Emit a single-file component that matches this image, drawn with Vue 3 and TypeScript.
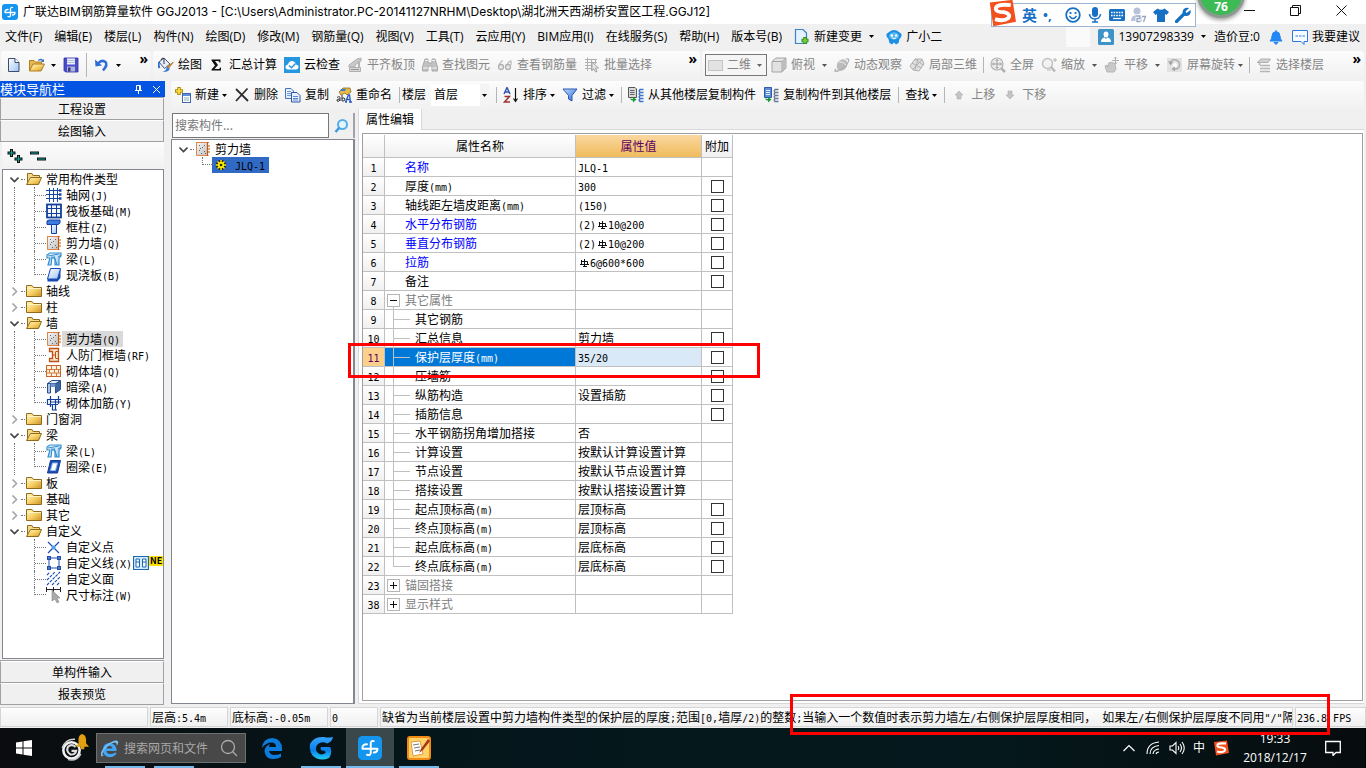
<script setup lang="ts">
import { h, reactive, ref } from 'vue'

interface Tool { label: string; icon?: string; caret?: boolean; sep?: boolean; off?: boolean; tight?: boolean }
interface Leaf { label: string; icon: string; selected?: boolean; isNew?: boolean }
interface Group { label: string; open: boolean; items: Leaf[] }
interface Prop { no: number; name: string; value: string; check?: boolean; level?: number; blue?: boolean; node?: string; last?: boolean }

// Half-width characters take six pixels next to twelve-pixel ideographs.
const Mix = (props: { text: string }) =>
  h('span', { class: 'mix' }, props.text.split(/([\x20-\x7e]+|⌀)/).filter(Boolean).map((part) => {
    if (part === '⌀') return h('svg', { class: 'rebar', viewBox: '0 0 12 10' }, [h('use', { href: '#i-rebar' })])
    return /^[\x20-\x7e]/.test(part) ? h('span', { class: 'half' }, part) : part
  }))
Mix.props = ['text']

const Ic = (props: { name: string }) =>
  h('svg', { class: 'ic', viewBox: '0 0 16 16', 'aria-hidden': 'true' }, [h('use', { href: '#i-' + props.name })])
Ic.props = ['name']

const Caret = () => h('svg', { class: 'caret', viewBox: '0 0 5 3', 'aria-hidden': 'true' }, [h('path', { d: 'M0 0H5L2.5 3Z', fill: 'currentColor' })])

const menus = ['文件(F)', '编辑(E)', '楼层(L)', '构件(N)', '绘图(D)', '修改(M)', '钢筋量(Q)', '视图(V)', '工具(T)', '云应用(Y)', 'BIM应用(I)', '在线服务(S)', '帮助(H)', '版本号(B)']

const drawTools: Tool[] = [
  { label: '绘图', icon: 'draw' }, { label: '汇总计算', icon: 'sigma' }, { label: '云检查', icon: 'cloud' },
  { label: '平齐板顶', icon: 'align', off: true }, { label: '查找图元', icon: 'bino', off: true },
  { label: '查看钢筋量', icon: 'glasses', off: true }, { label: '批量选择', icon: 'batch', off: true },
]
const viewTools: Tool[] = [
  { label: '俯视', icon: 'cube', caret: true, off: true }, { label: '动态观察', icon: 'orbit', off: true },
  { label: '局部三维', icon: 'part', off: true }, { label: '', sep: true },
  { label: '全屏', icon: 'full', off: true }, { label: '缩放', icon: 'zoom', caret: true, off: true },
  { label: '平移', icon: 'pan', caret: true, off: true }, { label: '屏幕旋转', icon: 'rotate', caret: true, tight: true, off: true },
  { label: '', sep: true }, { label: '选择楼层', icon: 'floors', off: true },
]
const editTools: Tool[] = [
  { label: '新建', icon: 'new', caret: true }, { label: '删除', icon: 'delete' }, { label: '复制', icon: 'copy' },
  { label: '重命名', icon: 'rename' }, { label: '', sep: true },
]
const listTools: Tool[] = [
  { label: '', sep: true }, { label: '排序', icon: 'sort', caret: true }, { label: '过滤', icon: 'filter', caret: true },
  { label: '', sep: true }, { label: '从其他楼层复制构件', icon: 'from' }, { label: '复制构件到其他楼层', icon: 'to' },
  { label: '', sep: true }, { label: '查找', caret: true }, { label: '', sep: true },
  { label: '上移', icon: 'up', off: true }, { label: '下移', icon: 'down', off: true },
]

const groups = reactive<Group[]>([
  { label: '常用构件类型', open: true, items: [
    { label: '轴网(J)', icon: 'grid' }, { label: '筏板基础(M)', icon: 'raft' }, { label: '框柱(Z)', icon: 'column' },
    { label: '剪力墙(Q)', icon: 'wall' }, { label: '梁(L)', icon: 'beam' }, { label: '现浇板(B)', icon: 'slab' }] },
  { label: '轴线', open: false, items: [] },
  { label: '柱', open: false, items: [] },
  { label: '墙', open: true, items: [
    { label: '剪力墙(Q)', icon: 'wall', selected: true }, { label: '人防门框墙(RF)', icon: 'frame' }, { label: '砌体墙(Q)', icon: 'brick' },
    { label: '暗梁(A)', icon: 'hidden' }, { label: '砌体加筋(Y)', icon: 'reinf' }] },
  { label: '门窗洞', open: false, items: [] },
  { label: '梁', open: true, items: [{ label: '梁(L)', icon: 'beam' }, { label: '圈梁(E)', icon: 'ring' }] },
  { label: '板', open: false, items: [] },
  { label: '基础', open: false, items: [] },
  { label: '其它', open: false, items: [] },
  { label: '自定义', open: true, items: [
    { label: '自定义点', icon: 'point' }, { label: '自定义线(X)', icon: 'line', isNew: true },
    { label: '自定义面', icon: 'area' }, { label: '尺寸标注(W)', icon: 'dim' }] },
])

const rows: Prop[] = [
  { no: 1, name: '名称', value: 'JLQ-1', blue: true },
  { no: 2, name: '厚度(mm)', value: '300', check: true },
  { no: 3, name: '轴线距左墙皮距离(mm)', value: '(150)', check: true },
  { no: 4, name: '水平分布钢筋', value: '(2)⌀10@200', check: true, blue: true },
  { no: 5, name: '垂直分布钢筋', value: '(2)⌀10@200', check: true, blue: true },
  { no: 6, name: '拉筋', value: '⌀6@600*600', check: true, blue: true },
  { no: 7, name: '备注', value: '', check: true },
  { no: 8, name: '其它属性', value: '', node: 'minus' },
  { no: 9, name: '其它钢筋', value: '', level: 1 },
  { no: 10, name: '汇总信息', value: '剪力墙', check: true, level: 1 },
  { no: 11, name: '保护层厚度(mm)', value: '35/20', check: true, level: 1 },
  { no: 12, name: '压墙筋', value: '', check: true, level: 1 },
  { no: 13, name: '纵筋构造', value: '设置插筋', check: true, level: 1 },
  { no: 14, name: '插筋信息', value: '', check: true, level: 1 },
  { no: 15, name: '水平钢筋拐角增加搭接', value: '否', level: 1 },
  { no: 16, name: '计算设置', value: '按默认计算设置计算', level: 1 },
  { no: 17, name: '节点设置', value: '按默认节点设置计算', level: 1 },
  { no: 18, name: '搭接设置', value: '按默认搭接设置计算', level: 1 },
  { no: 19, name: '起点顶标高(m)', value: '层顶标高', check: true, level: 1 },
  { no: 20, name: '终点顶标高(m)', value: '层顶标高', check: true, level: 1 },
  { no: 21, name: '起点底标高(m)', value: '层底标高', check: true, level: 1 },
  { no: 22, name: '终点底标高(m)', value: '层底标高', check: true, level: 1, last: true },
  { no: 23, name: '锚固搭接', value: '', node: 'plus' },
  { no: 38, name: '显示样式', value: '', node: 'plus' },
]
const current = ref(11)
const query = ref('')
const message = '缺省为当前楼层设置中剪力墙构件类型的保护层的厚度;范围[0,墙厚/2)的整数;当输入一个数值时表示剪力墙左/右侧保护层厚度相同， 如果左/右侧保护层厚度不同用"/"隔'
</script>

<template>
  <div class="screen">
    <svg class="sprite" aria-hidden="true">
      <defs>
        <linearGradient id="gold" x1="0" y1="0" x2="1" y2="1"><stop offset="0" stop-color="#fff6c0" /><stop offset=".5" stop-color="#f7d26a" /><stop offset="1" stop-color="#cf9220" /></linearGradient>
        <linearGradient id="blue" x1="0" y1="0" x2="1" y2="1"><stop offset="0" stop-color="#bfe0ff" /><stop offset="1" stop-color="#2a62c8" /></linearGradient>
        <linearGradient id="glass" x1="0" y1="0" x2="1" y2="1"><stop offset="0" stop-color="#fff" /><stop offset="1" stop-color="#9dc4f0" /></linearGradient>
        <linearGradient id="stone" x1="0" y1="0" x2="1" y2="1"><stop offset="0" stop-color="#f4f4f4" /><stop offset="1" stop-color="#c2c2c2" /></linearGradient>
        <linearGradient id="swirl" x1="0" y1="0" x2="0" y2="1"><stop offset="0" stop-color="#35a4ff" /><stop offset=".6" stop-color="#0a80ea" /><stop offset="1" stop-color="#22d0f5" /></linearGradient>
      </defs>
      <symbol id="i-app" viewBox="0 0 16 16"><rect width="16" height="16" rx="3" fill="#1496f0" /><path d="M3 8.500H13M8.500 4.500V11.500Q8 13.300 6 12.500M3 8.500Q2.500 5.500 6 5.500M8.500 4.500Q9 3 10.500 3.500M13 8.500Q13 11 10.500 11" stroke="#fff" stroke-width="1.300" fill="none" stroke-linecap="round" /></symbol>
      <symbol id="i-page" viewBox="0 0 16 16"><path d="M2.500 1.500H9L13 5.500V14.500H2.500Z" fill="url(#glass)" stroke="#3c4c6c" /><path d="M9 1.500V5.500H13" fill="#fff" stroke="#3c4c6c" /></symbol>
      <symbol id="i-open" viewBox="0 0 16 16"><path d="M.5 14V3.500H5L6.500 5H12.500V7" fill="#e5b952" stroke="#b07d20" /><path d="M.5 14L4 7H15.500L12 14Z" fill="url(#gold)" stroke="#b07d20" /><path d="M9 3Q12 .5 14 3L15 2V5H12L13 4Q11.500 2.500 9.500 4Z" fill="#3a6fc4" /></symbol>
      <symbol id="i-save" viewBox="0 0 16 16"><path d="M1 1H15V15H2.500L1 13.500Z" fill="#4a4ccc" stroke="#3030a0" stroke-width=".8" /><rect x="4" y="1.500" width="8" height="6" fill="#eef2ff" /><path d="M4 3.500H12M4 5.500H12" stroke="#9ab" stroke-width=".7" /><rect x="4" y="9.500" width="8" height="5" fill="#b0b4d8" /><rect x="5" y="10.500" width="2.500" height="4" fill="#333a80" /></symbol>
      <symbol id="i-undo" viewBox="0 0 16 16"><path d="M4 6.500Q8 2 11.500 5Q14 8 9 13.500" fill="none" stroke="#2e6ed4" stroke-width="2.600" /><path d="M1 2.500L1.500 9.500L8 8.500Z" fill="#2e6ed4" /></symbol>
      <symbol id="i-draw" viewBox="0 0 16 16"><path d="M1 5L6 1L12 7L6.500 11.500Z" fill="#e8eef8" stroke="#44587c" /><path d="M6 7V1.500Q4 0 3 3" fill="none" stroke="#334" /><path d="M1 5Q0 8 1.500 11" stroke="#2c6ed0" stroke-width="2" fill="none" /><path d="M15.500 5L11 11L9.500 9.500Z" fill="#e8a01c" stroke="#95620c" stroke-width=".6" /><path d="M9 9.500L12 12Q10 15.500 4.500 15Q8 14 9 9.500Z" fill="#3f7cd2" /></symbol>
      <symbol id="i-sigma" viewBox="0 0 16 16"><path d="M2.500 2.500H11.500V5.500H10.500Q10.500 4 9 4H6L9 8L5.500 12H9.500Q11 12 11 10.500H12V13.500H2.500V12.500L6 8.500L2.500 3.500Z" fill="#111" /></symbol>
      <symbol id="i-cloud" viewBox="0 0 16 16"><rect width="16" height="16" fill="#2796e0" /><path d="M4 12.500Q1 12 1.500 9.500Q2 7.500 4 7.500Q5 3.500 8.500 4Q11.500 4.500 12 7.500Q15 8 14.500 10.500Q14 12.500 12 12.500Z" fill="#fff" /><path d="M5 8.500L7.500 10.800L11.500 6.500" fill="none" stroke="#2796e0" stroke-width="1.500" /></symbol>
      <symbol id="i-align" viewBox="0 0 16 16"><path d="M2 8L10 2L14 1V4L8 8V10H2Z" fill="#c9c9c9" stroke="#b0b0b0" /><path d="M2.500 10.500H13.500V14.500H2.500Z" fill="#d5d5d5" stroke="#b0b0b0" /><path d="M4 12.500H12" stroke="#999" /><path d="M12 4V10" stroke="#b5b5b5" stroke-width="2" /></symbol>
      <symbol id="i-bino" viewBox="0 0 16 16"><path d="M3 2H6V6H10V2H13L15.500 10V14H10V9H6V14H.5V10Z" fill="#c2c2c2" stroke="#a8a8a8" /><path d="M3 3.500H6M10 3.500H13M1 11H6M10 11H15" stroke="#f2f2f2" /></symbol>
      <symbol id="i-glasses" viewBox="0 0 16 16"><path d="M1.500 9.500Q4 3.500 6 4M9 9.500Q12 3.500 14 4V8" fill="none" stroke="#b8b8b8" stroke-width="1.200" /><circle cx="4" cy="10" r="2.500" fill="#e9e9e9" stroke="#b0b0b0" stroke-width="1.300" /><circle cx="11" cy="10" r="2.500" fill="#e9e9e9" stroke="#b0b0b0" stroke-width="1.300" /></symbol>
      <symbol id="i-batch" viewBox="0 0 16 16"><path d="M1 2.500H13M1 5.500H13M1 8.500H8M1 11.500H8M3.500 .5V14M7.500 2V14M11.500 2V7" stroke="#b0b0b0" fill="none" /><path d="M8 5L14.500 11H11.500L13 14.500L11.500 15L10 12L8 13.500Z" fill="#e4e4e4" stroke="#a5a5a5" /></symbol>
      <symbol id="i-plate" viewBox="0 0 16 16"><rect x=".5" y="3.500" width="14" height="10" fill="#e2e2e2" stroke="#c4c4c4" /></symbol>
      <symbol id="i-cube" viewBox="0 0 16 16"><path d="M1 4.500L5 1H15V11L11 15H1Z" fill="#e2e2e2" stroke="#a5a5a5" /><path d="M1 4.500H11V15M11 4.500L15 1" fill="none" stroke="#a5a5a5" /><path d="M11 5L14.500 2V11L11 14.500Z" fill="#bdbdbd" /></symbol>
      <symbol id="i-orbit" viewBox="0 0 16 16"><ellipse cx="8" cy="8" rx="5" ry="6" transform="rotate(35 8 8)" fill="#bcbcbc" /><path d="M2 12Q-1 15 4 14Q9 12 13 7Q17 1 12 2" fill="none" stroke="#b0b0b0" stroke-width="1.300" /><path d="M5 5Q9 4 12 8" stroke="#eee" fill="none" /></symbol>
      <symbol id="i-part" viewBox="0 0 16 16"><path d="M1 9L6 2L13 2L15 7L10 14L4 13Z" fill="#e0e0e0" stroke="#b0b0b0" /><path d="M3 6L12 11M9 2L6 13M6 2L14 8M13 3L4 12" stroke="#b0b0b0" fill="none" /></symbol>
      <symbol id="i-full" viewBox="0 0 16 16"><circle cx="7" cy="7" r="6" fill="#eee" stroke="#b2b2b2" stroke-width="1.200" /><path d="M7 2.500V11.500M2.500 7H11.500M5.500 4L7 2.500L8.500 4M5.500 10L7 11.500L8.500 10M4 5.500L2.500 7L4 8.500M10 5.500L11.500 7L10 8.500" stroke="#9c9c9c" fill="none" /><path d="M11.500 11.500L15 15" stroke="#b0b0b0" stroke-width="2.500" /></symbol>
      <symbol id="i-zoom" viewBox="0 0 16 16"><circle cx="6.500" cy="6.500" r="5" fill="#f2f2f2" stroke="#c2c2c2" stroke-width="1.500" /><path d="M10 10L14 14.500" stroke="#b8b8b8" stroke-width="2.500" /><path d="M14 1V5M12 3H16M10 13H6" stroke="#b5b5b5" /></symbol>
      <symbol id="i-pan" viewBox="0 0 16 16"><path d="M3 15L1 9L3 8L4 10L5 5.500L7 6L7.500 5L9 6L11 7L12 12L10 15Z" fill="#c9c9c9" stroke="#b5b5b5" /><path d="M11.500 0V7M8 3.500H15M10 1.500L11.500 0L13 1.500M10 5.500L11.500 7L13 5.500" stroke="#b0b0b0" fill="none" /></symbol>
      <symbol id="i-rotate" viewBox="0 0 16 16"><rect x="0" y="1" width="15" height="14" fill="#e2e2e2" /><path d="M3 7Q4 2 9 3Q14 5 12 10Q10 13 6 12" fill="none" stroke="#b0b0b0" stroke-width="1.500" /><path d="M1 4L3.500 8.500L6 5ZM8 9.500L4.500 12L8 14.500Z" fill="#a5a5a5" /><circle cx="8" cy="8" r="2" fill="#fff" /></symbol>
      <symbol id="i-floors" viewBox="0 0 16 16"><path d="M1 5.500L5 2H14.500L12 5.500Z" fill="#d0d0d0" stroke="#b0b0b0" /><path d="M4 8.500H14M4 11.500H14M4 14.500H14M3.500 6V8" stroke="#b5b5b5" stroke-width="1.600" /></symbol>
      <symbol id="i-new" viewBox="0 0 16 16"><path d="M4 0V8M0 4H8" stroke="#b08b00" stroke-width="3.500" /><path d="M4 1V7M1 4H7" stroke="#ffe24a" stroke-width="1.700" /><rect x="7.500" y="6.500" width="8" height="9" fill="#fff" stroke="#3f68ad" /><path d="M8 8H15" stroke="#5b8ee0" stroke-width="2" /><path d="M9 11H14M9 13H14" stroke="#8ab" /></symbol>
      <symbol id="i-delete" viewBox="0 0 16 16"><path d="M2 2L14 14M13.500 1.500L2 14" stroke="#2e2e2e" stroke-width="1.800" /></symbol>
      <symbol id="i-copy" viewBox="0 0 16 16"><path d="M.5 1.500H6L8.500 4V11.500H.5Z" fill="#e7f0ff" stroke="#4671bd" /><path d="M2 4.500H6M2 6.500H6M2 8.500H6" stroke="#7298d6" /><path d="M6.500 5.500H12L15 8.500V15H6.500Z" fill="#e7f0ff" stroke="#2c57a8" /><path d="M8 9.500H13M8 11.500H13M8 13H13" stroke="#5c87cf" /></symbol>
      <symbol id="i-rename" viewBox="0 0 16 16"><path d="M3 5L7 1H14L15 5L11 8L9 6L5 8Z" fill="#e6bb49" stroke="#7a5c15" stroke-width=".7" /><path d="M5 2H10L9 4H4Z" fill="#3f7fc0" /><path d="M1 10.500Q4 8.500 4 11V14M4 12Q0 12 1 14Q3 15 4 13M6 8V14Q9 14.500 9 12Q8.500 10 6 11.500" stroke="#333" fill="none" /><path d="M9.500 15L12.500 8H13.500L14.500 15M10.500 12.500H14M9 15H11M13 15H16" stroke="#2458c0" stroke-width="1.300" fill="none" /></symbol>
      <symbol id="i-sort" viewBox="0 0 16 16"><path d="M1 7L4 .5L7 7M2 5H6" stroke="#2c50b0" stroke-width="1.400" fill="none" /><path d="M1.500 9.500H6.500L1.500 15H7" stroke="#a03030" stroke-width="1.400" fill="none" /><path d="M12.500 1V14M10.500 11.500L12.500 14.500L14.500 11.500" stroke="#111" stroke-width="1.200" fill="none" /></symbol>
      <symbol id="i-filter" viewBox="0 0 16 16"><path d="M1 2H15L10 8.500V14L6.500 12V8.500Z" fill="url(#blue)" stroke="#2856b8" /></symbol>
      <symbol id="i-from" viewBox="0 0 16 16"><path d="M.5 .5H7L8.500 2V10.500H.5Z" fill="#d8d8d8" stroke="#555" /><path d="M2 3.500H6.500M2 5.500H6.500M2 7.500H6.500" stroke="#666" /><path d="M2 11.500Q3 14 5 13.500V15.500L8.500 12.500L5 10V12Z" fill="#179b35" /><path d="M15.500 2.500H12Q10.500 4 12 5.500H15.500M12 5.500Q10.500 7 12 8.500H15.500M12 8.500Q10.500 10 12 11.500H15.500M12 11.500Q10.500 13 12 14.500H15.500" stroke="#3d77ca" stroke-width="1.500" fill="none" /></symbol>
      <symbol id="i-to" viewBox="0 0 16 16"><path d="M1.500 .5H8.500V10.500H1.500Z" fill="#5c8eda" stroke="#2c5ca8" /><path d="M3 3.500H7M3 5.500H7M3 7.500H7" stroke="#e3edff" /><path d="M2 11.500Q3 14 5 13.500V15.500L8.500 12.500L5 10V12Z" fill="#179b35" /><path d="M15.500 2.500H12Q10.500 4 12 5.500H15.500M12 5.500Q10.500 7 12 8.500H15.500M12 8.500Q10.500 10 12 11.500H15.500M12 11.500Q10.500 13 12 14.500H15.500" stroke="#667790" stroke-width="1.300" fill="none" /></symbol>
      <symbol id="i-up" viewBox="0 0 16 16"><path d="M8 4L12 8H10V12H6V8H4Z" fill="#c4c4c4" stroke="#b0b0b0" stroke-width=".6" /></symbol>
      <symbol id="i-down" viewBox="0 0 16 16"><path d="M8 12L12 8H10V4H6V8H4Z" fill="#c4c4c4" stroke="#b0b0b0" stroke-width=".6" /></symbol>
      <symbol id="i-change" viewBox="0 0 16 16"><path d="M1.500 .5H9L12.500 4V14.500H1.500Z" fill="#e4f1ff" stroke="#3c82c4" stroke-width="1.200" /><path d="M11 8V15M7.500 11.500H14.500" stroke="#2f8c1c" stroke-width="3.600" /><path d="M11 9V14M8.500 11.500H13.500" stroke="#75cc42" stroke-width="1.800" /></symbol>
      <symbol id="i-robot" viewBox="0 0 16 16"><path d="M3 3Q8-1 13 3L15.500 5Q16 8 13.500 10L12.500 14L10 15.500L8 13.500L6 15.500L3.500 14L2.500 10Q0 8 .5 5Z" fill="#1c8fe4" /><ellipse cx="8" cy="7" rx="5" ry="3.700" fill="#56b8f5" /><circle cx="5.800" cy="6.500" r="1.200" fill="#fff" /><circle cx="10.200" cy="6.500" r="1.200" fill="#fff" /><path d="M6 8.800Q8 10.500 10 8.800" stroke="#fff" fill="none" /></symbol>
      <symbol id="i-user" viewBox="0 0 16 16"><rect width="16" height="16" rx="1.500" fill="#3c93c8" /><path d="M8 2.500Q10.500 2.500 10.500 5.500Q10.500 8 8 8.500Q5.500 8 5.500 5.500Q5.500 2.500 8 2.500M3 13Q3 9 6.500 8.500L8 10L9.500 8.500Q13 9 13 13Z" fill="#fff" /></symbol>
      <symbol id="i-bell" viewBox="0 0 16 16"><path d="M8 1V2.500M8 2.500Q12 3 12 7Q12 10 14 12H2Q4 10 4 7Q4 3 8 2.500M6 13.500H10L8 15.500Z" fill="#2387f5" stroke="#2387f5" /></symbol>
      <symbol id="i-chat" viewBox="0 0 16 16"><path d="M.5 1.500H15.500V12.500H12V15.500L9 12.500H.5Z" fill="#f7fbff" stroke="#2a78e0" /><path d="M3.500 7H6M7 7H9.500M10.500 7H13" stroke="#2a78e0" stroke-width="1.200" /></symbol>
      <symbol id="i-plus2" viewBox="0 0 16 16"><path d="M4.500 1V9M.5 5H8.500M11.500 7V15M7.500 11H15.500" stroke="#111" stroke-width="3" /><path d="M4.500 2V8M1.500 5H7.500M11.500 8V14M8.500 11H14.500" stroke="#12a5a0" stroke-width="1" /></symbol>
      <symbol id="i-minus2" viewBox="0 0 16 16"><path d="M0 5H9M7 11H16" stroke="#111" stroke-width="3" /><path d="M1 5H8M8 11H15" stroke="#12a5a0" stroke-width="1" /></symbol>
      <symbol id="i-open2" viewBox="0 0 16 16"><path d="M1.500 13V2.500H6L7 4.500H13.500V6.500" fill="#f4d98a" stroke="#8e6a1a" /><path d="M.5 13.500L4.500 6.500H15.500L12.500 13.500Z" fill="url(#gold)" stroke="#8e6a1a" /></symbol>
      <symbol id="i-folder" viewBox="0 0 16 16"><path d="M.5 13.500V2.500H6L7.500 4.500H15.500V13.500Z" fill="url(#gold)" stroke="#8e6a1a" /><path d="M1 5.500H15" stroke="#fff3c4" /></symbol>
      <symbol id="i-grid" viewBox="0 0 16 16"><path d="M3.500 1V15M7.500 1V15M11.500 1V15M0 3.500H15M0 7.500H15M0 11.500H15" stroke="#1745aa" fill="none" /><path d="M13 3.500H15.500M13 7.500H15.500M13 11.500H15.500" stroke="#1745aa" stroke-width="2.500" /></symbol>
      <symbol id="i-raft" viewBox="0 0 16 16"><rect x="1" y="1.500" width="14" height="13" fill="#eef5ff" stroke="#123f98" stroke-width="1.800" /><path d="M5.500 2V14M10.500 2V14M1 5.500H15M1 10.500H15" stroke="#123f98" /><rect x="5.500" y="5.500" width="5" height="5" fill="#fff" stroke="#123f98" /></symbol>
      <symbol id="i-column" viewBox="0 0 16 16"><path d="M1 2L3 1H14V4L12 5.500H1Z" fill="#3c7be0" stroke="#143fa0" /><path d="M5.500 5.500H10.500V14.500H5.500Z" fill="url(#glass)" stroke="#143fa0" /></symbol>
      <symbol id="i-wall" viewBox="0 0 16 16"><path d="M2 2H12V14H2Z" fill="url(#stone)" /><path d="M1.500 1V14.500H13.500M1 1.500H14" stroke="#dd864c" fill="none" /><path d="M12.500 1V15" stroke="#c4561c" stroke-width="1.200" /><path d="M13 5H15M13 8H15M13 11H15" stroke="#e18b3c" stroke-width="1.500" /><path d="M4 4.500H5M7 6.500H8M4 9.500H5M6 12.500H7M9 10.500H10M9 4.500H10M10 12.500H11M5 7.500H6" stroke="#666" /></symbol>
      <symbol id="i-beam" viewBox="0 0 16 16"><path d="M1 4L4 2H15V5L13 7V14H9V8L6 6L5 14H2L4 7H1Z" fill="url(#glass)" stroke="#2f8ed2" stroke-width="1.200" /><path d="M2 5L13 3M8 5L11 14M12 6L15 4" stroke="#2f8ed2" /></symbol>
      <symbol id="i-slab" viewBox="0 0 16 16"><path d="M4.500 2H14.500V11L11.500 14.500H1.500V12Z" fill="#174ab4" /><path d="M4.500 1.500H14.500L11.500 12H1.500Z" fill="url(#glass)" stroke="#174ab4" /></symbol>
      <symbol id="i-frame" viewBox="0 0 16 16"><path d="M3.500 1.500H12.500V14.500H3.500V11.500H6.500V4.500H3.500Z" fill="#ffe5cd" stroke="#bd5214" stroke-width="1.300" /><path d="M9.500 5V11M7 8H10M9.500 4.500H12M9.500 11.500H12" stroke="#bd5214" fill="none" /></symbol>
      <symbol id="i-brick" viewBox="0 0 16 16"><rect x=".5" y="2.500" width="14" height="11" fill="#fff0df" stroke="#c7662a" /><path d="M1 6.500H14M1 10H14M5.500 3V6M10.500 3V6M3.500 7V10M8.500 7V10M12.500 7V10M5.500 10V13M10.500 10V13" stroke="#d37a3b" /></symbol>
      <symbol id="i-hidden" viewBox="0 0 16 16"><path d="M1.500 4.500L6 1.500H14.500L10 4.500Z" fill="#e4eefa" stroke="#2a4c88" /><path d="M9.500 5L14.500 2V10.500L9.500 14Z" fill="#3c66a4" stroke="#2a4c88" /><path d="M1.500 4.500H4.500V14H1.500Z" fill="#a8c4e8" stroke="#2a4c88" /><path d="M4.500 4.500H9.500V8H4.500Z" fill="#6f96cc" /></symbol>
      <symbol id="i-reinf" viewBox="0 0 16 16"><path d="M1 4.500H15M1 9.500H12M4.500 1V12M9.500 4V15M12.500 1V9M6.500 10V15H11M4 7H15M1.500 4V10" fill="none" stroke="#143f9c" stroke-width="1.200" /></symbol>
      <symbol id="i-ring" viewBox="0 0 16 16"><path d="M4.500 1.500H14.500L11.500 14H1.500Z" fill="#1c4eb6" stroke="#123c94" /><path d="M6.500 4H11.500L9.500 11.500H4.500Z" fill="#fff" stroke="#8cb8ec" /></symbol>
      <symbol id="i-point" viewBox="0 0 16 16"><path d="M2 3L13 14M13 3L2 14" stroke="#1c4eb0" stroke-width="1.200" /><circle cx="7.500" cy="8.500" r="2" fill="#4da1e8" /></symbol>
      <symbol id="i-line" viewBox="0 0 16 16"><path d="M3 3H13V13H3Z" fill="#fff" stroke="#1c4eb0" /><path d="M1 1H5V5H1ZM11 1H15V5H11ZM1 11H5V15H1ZM11 11H15V15H11Z" fill="#1c4eb0" /><path d="M2.500 2.500H3.500V3.500H2.500ZM12.500 2.500H13.500V3.500H12.500ZM2.500 12.500H3.500V13.500H2.500ZM12.500 12.500H13.500V13.500H12.500Z" fill="#fff" /></symbol>
      <symbol id="i-area" viewBox="0 0 16 16"><path d="M1 4L4 1M1 9L9 1M1 14L14 1M6 14L14 6M11 14L14 11" stroke="#1c4eb0" stroke-width="1.100" stroke-dasharray="3 1" /></symbol>
      <symbol id="i-dim" viewBox="0 0 16 16"><path d="M.5 0V5M14.500 0V5M1 2.500H14M7.500 0V5" stroke="#222" /><path d="M6 3L14 11H11L13 15L11 16L9 12L6 14Z" fill="#aaa" stroke="#888" stroke-width=".6" /></symbol>
      <symbol id="i-book" viewBox="0 0 16 16"><path d="M.5 1.500H15.500V14.500H.5Z" fill="#d7ecff" stroke="#1b67b0" stroke-width="1.200" /><path d="M3 4H6.500V12H3ZM9.500 4H13V12H9.500ZM3 7H6.500M9.500 7H13" fill="#fff" stroke="#1b67b0" /></symbol>
      <symbol id="i-find" viewBox="0 0 16 16"><circle cx="9.500" cy="6.500" r="4.500" fill="#e5f5ff" stroke="#56aee6" stroke-width="2" /><path d="M6.500 9.500L2.500 14" stroke="#3c9cdf" stroke-width="2.600" /></symbol>
      <symbol id="i-gear" viewBox="0 0 16 16"><path d="M8 3V13M3 8H13M4.500 4.500L11.500 11.500M11.500 4.500L4.500 11.500" stroke="#222" stroke-width="3.400" /><path d="M8 3V13M3 8H13M4.500 4.500L11.500 11.500M11.500 4.500L4.500 11.500" stroke="#ffef00" stroke-width="1.500" /><circle cx="8" cy="8" r="3" fill="#ffef00" /><circle cx="8" cy="8" r="1.300" fill="#222" /></symbol>
      <symbol id="i-rebar" viewBox="0 0 12 10"><path d="M3.500 3.500H9.500V6.500H3.500ZM6.500 1V9M2 6.500H11M5 8.500H9M3.500 2V7" stroke="#111" fill="none" /></symbol>
      <symbol id="i-s" viewBox="0 0 16 16"><path d="M1 2L14 .5L16 13L3 15.500Z" fill="#f2501d" /><path d="M13 3.500Q4 2.500 4.500 6Q5 7.500 9 7.500Q13.500 8.500 11.500 11Q9 13 4 11.500" fill="none" stroke="#fff" stroke-width="2.200" /></symbol>
      <symbol id="i-smile" viewBox="0 0 16 16"><circle cx="8" cy="8" r="6.800" fill="none" stroke="#1670c4" stroke-width="1.800" /><path d="M4.500 9Q8 14 11.500 9" fill="none" stroke="#1670c4" stroke-width="1.400" /><path d="M5.500 5V7M10.500 5V7" stroke="#1670c4" stroke-width="1.800" /></symbol>
      <symbol id="i-mic" viewBox="0 0 16 16"><rect x="5" y="0" width="6" height="10" rx="3" fill="#1670c4" /><path d="M2.500 7Q3 12 8 12Q13 12 13.500 7M8 12V15M5 15H11" stroke="#1670c4" stroke-width="1.500" fill="none" /></symbol>
      <symbol id="i-keys" viewBox="0 0 16 16"><rect y="2" width="16" height="12" rx="1.500" fill="#1670c4" /><path d="M2 5.500H14M2 8.500H14" stroke="#fff" stroke-width="1.600" stroke-dasharray="1.600 1" /><path d="M4 11.500H12" stroke="#fff" stroke-width="1.300" /></symbol>
      <symbol id="i-person" viewBox="0 0 16 16"><circle cx="6" cy="4" r="3.500" fill="#b8c2d8" /><path d="M0 14Q0 8 6 8Q10 8 11 11V14Z" fill="#b8c2d8" /><path d="M6 9H9V11.500H6V14.500H9.500M11 9.500H14.500L12.500 15" stroke="#fff" stroke-width="3" fill="none" /><path d="M6 9H9V11.500H6V14.500H9.500M11 9.500H14.500L12.500 15" stroke="#98a5c2" stroke-width="1.300" fill="none" /></symbol>
      <symbol id="i-shirt" viewBox="0 0 16 16"><path d="M4.500 1.500Q8 4 11.500 1.500L16 5L13.500 8L12 7V15H4V7L2.500 8L0 5Z" fill="#1670c4" /></symbol>
      <symbol id="i-wrench" viewBox="0 0 16 16"><path d="M1.500 14.500L9 7" stroke="#1670c4" stroke-width="3.200" stroke-linecap="round" /><path d="M14 1L10.500 4.500L11.500 6L15.500 3Q16.500 8 12 9Q8 9.500 7.500 5.500Q8 0 14 1" fill="#1670c4" /></symbol>
      <symbol id="i-win" viewBox="0 0 16 16"><path d="M0 2.500L6.500 1.500V7.500H0ZM7.500 1.300L16 0V7.500H7.500ZM0 8.500H6.500V14.500L0 13.500ZM7.500 8.500H16V16L7.500 14.700Z" fill="#fff" /></symbol>
      <symbol id="i-ring2" viewBox="0 0 24 24"><circle cx="9" cy="14" r="7" fill="none" stroke="#f1f1f1" stroke-width="2.200" /><path d="M12.500 11Q9 8 6 11Q4 15 8 17.500Q12 18 13 14.500H9" fill="none" stroke="#ddd" stroke-width="1.800" /><path d="M1 12Q4 4 12 4.500M17 17Q14 23.500 6 22" stroke="#ccc" stroke-width="1.200" fill="none" /><path d="M18 0Q21.500 1 21.500 5V8L24 11H13L15 8V5Q15 1 18 0M17 11H20V13H17Z" fill="#e0a010" /></symbol>
      <symbol id="i-ie" viewBox="0 0 24 24"><path d="M21 15H8Q9 19 13 19Q17 19 19 17L21 18Q18 23 12 23Q4 22 3.500 14Q4 5 12.500 5Q21 6 21 15M8 12H16Q15 8.500 12 8.500Q9 9 8 12" fill="#42a5f5" fill-rule="evenodd" /><path d="M2 22Q-1 17 7 9Q15 2 21 2Q25 3 21 9Q22 4 18 4.500Q11 6 5 14Q1 21 5 21Z" fill="#78c5fb" /></symbol>
      <symbol id="i-edge" viewBox="0 0 24 24"><path d="M2 12Q3 2 12.500 2Q22 3 22 13V15H9Q10 19 14.500 19Q18 19 21 17.500V21Q17 23.500 12 23Q5 22 4.500 15Q5 10 10 8Q9 9.500 9 11H16Q16 6.500 11.500 6.500Q6 6.500 2 12" fill="#0b7cdc" /></symbol>
      <symbol id="i-g" viewBox="0 0 24 24"><path d="M24 1Q19 2 15 1Q5 0 1 8Q0 15 4 20Q11 26 20 22Q24 16 21 11H12Q11 13 12.500 14.500Q17 14 16.500 17Q12 20 8.500 16.500Q5 12 9 8Q13 5 18 7.500Q23 6 24 1" fill="url(#swirl)" /></symbol>
      <symbol id="i-note" viewBox="0 0 24 24"><rect x="1" y="1" width="22" height="22" rx="2" fill="#ffd26b" stroke="#f28a13" stroke-width="2" /><path d="M4 6L13 5L16 18L6 20Z" fill="#fff" stroke="#dc9d37" /><path d="M6 9L12 8M7 12L13 11M8 15L13 14" stroke="#777" /><path d="M21 3L14 13L12 17L16 14L23 5Z" fill="#a7351b" /></symbol>
      <symbol id="i-tray" viewBox="0 0 16 16"><path d="M2.500 11L8 5.500L13.500 11" stroke="#fff" fill="none" stroke-width="1.200" /></symbol>
      <symbol id="i-wifi" viewBox="0 0 16 16"><path d="M2 14Q2 3 14 2M5 14Q5 6.500 14 5.500M8 14Q8.500 9.500 14 9M11 14Q11.500 12 14 12" stroke="#fff" fill="none" stroke-width="1.100" /></symbol>
      <symbol id="i-vol" viewBox="0 0 16 16"><path d="M1 6H3.500L7 2.500V13.500L3.500 10H1ZM9 6Q10.500 8 9 10M11 4Q14 8 11 12M13 2Q17.500 8 13 14" stroke="#fff" fill="none" stroke-width="1.100" /></symbol>
      <symbol id="i-note2" viewBox="0 0 16 16"><path d="M.7 1.500H15.300V12.500H11L8 15.500V12.500H.7Z" stroke="#fff" fill="none" stroke-width="1.300" /></symbol>
    </svg>

    <header class="title">
      <Ic name="app" />
      <h1>广联达BIM钢筋算量软件 GGJ2013 - [C:\Users\Administrator.PC-20141127NRHM\Desktop\湖北洲天西湖桥安置区工程.GGJ12]</h1>
      <div class="winbtns">
        <button aria-label="最小化"><svg viewBox="0 0 11 11"><path d="M0 5.500H11" stroke="#111" /></svg></button>
        <button aria-label="还原"><svg viewBox="0 0 11 11"><path d="M.5 2.500H8.500V10.500H.5ZM2.500 2.500V.5H10.500V8.500H8.500" fill="none" stroke="#111" /></svg></button>
        <button aria-label="关闭"><svg viewBox="0 0 11 11"><path d="M.5 .5L10.500 10.500M10.500 .5L.5 10.500" stroke="#111" /></svg></button>
      </div>
      <div class="ime">
        <Ic name="s" /><b>英</b><b class="punct">•,</b>
        <Ic v-for="n in ['smile', 'mic', 'keys', 'person', 'shirt', 'wrench']" :key="n" :name="n" />
      </div>
      <div class="ball">76</div>
    </header>

    <nav class="menu">
      <button v-for="m in menus" :key="m">{{ m }}</button>
      <button class="tb"><Ic name="change" />新建变更<Caret class="wide" /></button>
      <button class="tb"><Ic name="robot" />广小二</button>
      <div class="account">
        <span class="blank"></span>
        <button class="tb"><Ic name="user" />13907298339<Caret class="wide" /></button>
        <span>造价豆:0</span>
        <button class="tb" aria-label="消息"><Ic name="bell" /></button>
        <button class="tb"><Ic name="chat" />我要建议</button>
      </div>
    </nav>

    <div class="bars">
      <div class="bar files">
        <button class="tb" aria-label="新建"><Ic name="page" /></button>
        <button class="tb" aria-label="打开"><Ic name="open" /><Caret /></button>
        <button class="tb" aria-label="保存"><Ic name="save" /></button>
        <i class="sep tall"></i>
        <button class="tb" aria-label="撤销"><Ic name="undo" /><Caret class="wide" /></button>
        <button class="more">»</button>
      </div>
      <div class="bar drawing">
        <button v-for="t in drawTools" :key="t.label" class="tb" :class="{ off: t.off }"><Ic :name="t.icon" />{{ t.label }}</button>
        <button class="more">»</button>
      </div>
      <div class="bar viewing">
        <label class="mode"><Ic name="plate" /><select aria-label="视图模式" disabled><option>二维</option></select><Caret /></label>
        <template v-for="(t, i) in viewTools" :key="i">
          <i v-if="t.sep" class="sep"></i>
          <button v-else class="tb" :class="{ off: t.off }"><Ic :name="t.icon" />{{ t.label }}<Caret v-if="t.caret" :class="{ wide: !t.tight }" /></button>
        </template>
        <button class="more">»</button>
      </div>
    </div>

    <main class="work">
      <aside class="side">
        <div class="sidehead">
          <span>模块导航栏</span>
          <button aria-label="固定"><svg viewBox="0 0 9 9"><path d="M2.500 5.500V.5H6.500V5.500M5.500 1V5.500M1 5.500H8M4.500 6V9" stroke="#fff" fill="none" /></svg></button>
          <button aria-label="关闭"><svg viewBox="0 0 9 9"><path d="M1 1L8 8M8 1L1 8" stroke="#fff" /></svg></button>
        </div>
        <button class="page">工程设置</button>
        <button class="page">绘图输入</button>
        <div class="treetools">
          <button aria-label="全部展开"><Ic name="plus2" /></button>
          <button aria-label="全部折叠"><Ic name="minus2" /></button>
        </div>
        <div class="tree">
          <template v-for="(g, gi) in groups" :key="gi">
            <button class="node" @click="g.open = !g.open">
              <svg class="chev" viewBox="0 0 9 9"><path :d="g.open ? 'M.5 2.500L4.500 6.500L8.500 2.500' : 'M2.500 .5L6.500 4.500L2.500 8.500'" fill="none" :stroke="g.open ? '#444' : '#a6a6a6'" stroke-width="1.600" /></svg>
              <i class="dash"></i><Ic :name="g.open ? 'open2' : 'folder'" /><span>{{ g.label }}</span>
            </button>
            <template v-if="g.open">
              <button v-for="(l, li) in g.items" :key="li" class="leaf" :class="{ on: l.selected }">
                <i class="rail" :class="{ clear: gi === groups.length - 1 }"></i>
                <i class="elbow" :class="{ end: li === g.items.length - 1 }"></i>
                <Ic :name="l.icon" /><span class="leafname"><Mix :text="l.label" /></span>
                <template v-if="l.isNew"><Ic name="book" /><b class="new">NE</b></template>
              </button>
            </template>
          </template>
        </div>
        <button class="page">单构件输入</button>
        <button class="page">报表预览</button>
      </aside>

      <section class="body">
        <div class="bar editing">
          <template v-for="(t, i) in editTools" :key="i">
            <i v-if="t.sep" class="sep"></i>
            <button v-else class="tb"><Ic :name="t.icon" />{{ t.label }}<Caret v-if="t.caret" /></button>
          </template>
          <label class="floor">楼层<span><select><option>首层</option></select><Caret /></span></label>
          <template v-for="(t, i) in listTools" :key="i">
            <i v-if="t.sep" class="sep"></i>
            <button v-else class="tb" :class="{ off: t.off }"><Ic v-if="t.icon" :name="t.icon" />{{ t.label }}<Caret v-if="t.caret" /></button>
          </template>
        </div>

        <div class="panes">
          <div class="members">
            <div class="search">
              <input v-model="query" type="text" placeholder="搜索构件..." aria-label="搜索构件">
              <button aria-label="搜索"><Ic name="find" /></button>
            </div>
            <div class="list">
              <button class="node"><svg class="chev" viewBox="0 0 9 9"><path d="M.5 2.500L4.500 6.500L8.500 2.500" fill="none" stroke="#444" stroke-width="1.600" /></svg><i class="dash"></i><Ic name="wall" /><span>剪力墙</span></button>
              <button class="leaf member"><i class="rail clear"></i><i class="elbow end"></i><span class="pick"><Ic name="gear" /><Mix text="JLQ-1" /></span></button>
            </div>
          </div>

          <div class="editor">
            <div class="tabs"><button class="tab">属性编辑</button></div>
            <div class="sheet">
              <table>
                <thead><tr><th class="no"></th><th class="name">属性名称</th><th class="value hot">属性值</th><th class="extra">附加</th></tr></thead>
                <tbody>
                  <tr v-for="r in rows" :key="r.no" :class="{ cur: r.no === current }" @click="current = r.no">
                    <th class="no"><Mix :text="String(r.no)" /></th>
                    <td class="name">
                      <div class="cell" :class="{ blue: r.blue, group: r.node }">
                        <span class="slot" :class="{ child: r.level, last: r.last, parent: r.node === 'minus' }">
                          <button v-if="r.node" class="fold" :aria-label="r.name"><svg viewBox="0 0 11 11"><path :d="r.node === 'plus' ? 'M2 5.500H9M5.500 2V9' : 'M2 5.500H9'" stroke="#111" /></svg></button>
                        </span>
                        <Mix :text="r.name" />
                      </div>
                    </td>
                    <td class="value"><div class="cell"><Mix :text="r.value" /></div></td>
                    <td class="extra"><input v-if="r.check" type="checkbox" :aria-label="r.name + ' 附加'"></td>
                  </tr>
                </tbody>
              </table>
              <div class="mark rowmark"></div>
            </div>
          </div>
        </div>
      </section>
    </main>

    <footer class="status">
      <span class="s1"></span>
      <span class="s2"><Mix text="层高:5.4m" /></span>
      <span class="s3"><Mix text="底标高:-0.05m" /></span>
      <span class="s4"><Mix text="0" /></span>
      <span class="s5"><Mix :text="message" /></span>
      <span class="s6"><Mix text="236.8 FPS" /></span>
      <div class="mark statusmark"></div>
    </footer>

    <div class="taskbar">
      <button class="start" aria-label="开始"><Ic name="win" /></button>
      <button class="helper" aria-label="助手"><svg viewBox="0 0 24 24"><use href="#i-ring2" /></svg></button>
      <label class="tasksearch">
        <svg class="big" viewBox="0 0 24 24"><use href="#i-ie" /></svg>
        <input type="text" placeholder="搜索网页和文件" aria-label="搜索网页和文件">
        <svg class="lens" viewBox="0 0 18 18"><circle cx="8" cy="8" r="6.500" fill="none" stroke="#aaa" stroke-width="1.300" /><path d="M12.500 12.500L17 17" stroke="#aaa" stroke-width="1.300" /></svg>
      </label>
      <div class="apps">
        <button aria-label="浏览器"><svg viewBox="0 0 24 24"><use href="#i-edge" /></svg></button>
        <button class="run" aria-label="广联达"><svg viewBox="0 0 24 24"><use href="#i-g" /></svg></button>
        <button class="run active" aria-label="钢筋算量"><svg viewBox="0 0 24 24"><use href="#i-app" /></svg></button>
        <button class="run" aria-label="便签"><svg viewBox="0 0 24 24"><use href="#i-note" /></svg></button>
      </div>
      <div class="tray">
        <button aria-label="显示隐藏的图标"><Ic name="tray" /></button>
        <button aria-label="网络"><Ic name="wifi" /></button>
        <button aria-label="音量"><Ic name="vol" /></button>
        <button>中</button>
        <button aria-label="输入法"><Ic name="s" /></button>
      </div>
      <div class="clock"><span>19:33</span><span>2018/12/17</span></div>
      <button class="notify" aria-label="通知"><Ic name="note2" /></button>
    </div>
  </div>
</template>

<style>
body { margin: 0; }
.ic { width: 16px; height: 16px; flex: none; display: block; }
.caret { width: 5px; height: 3px; flex: none; display: block; }
.mix { white-space: pre; }
.half { font-family: "DejaVu Sans Mono", monospace; font-size: 10px; line-height: 10px; }
.rebar { display: inline-block; width: 12px; height: 10px; vertical-align: -1px; }
</style>

<style scoped>
* { box-sizing: border-box; }
.screen { position: relative; display: flex; flex-direction: column; height: 100vh; overflow: hidden; background: #f0f0f0; color: #000; font: 12px/16px "Open Sans", "Noto Sans CJK SC", sans-serif; white-space: nowrap; }
.sprite { position: absolute; width: 0; height: 0; }
button { display: flex; align-items: center; margin: 0; padding: 0; border: 0; background: none; color: inherit; font: inherit; white-space: nowrap; flex: none; }
select { appearance: none; border: 0; margin: 0; padding: 0; background: none; color: inherit; font: inherit; opacity: 1; }

.title { position: relative; display: flex; align-items: center; gap: 5px; height: 24px; padding-left: 2px; background: #fff; flex: none; }
h1 { margin: 0; font: 12px/16px Inter, "Noto Sans CJK SC", sans-serif; }
.winbtns { display: flex; margin-left: auto; padding: 0 2px 4px 0; }
.winbtns button { width: 46px; justify-content: center; }
.winbtns svg { width: 11px; height: 11px; }
.ime { position: absolute; z-index: 3; top: 3px; right: 170px; display: flex; align-items: center; gap: 6px; height: 24px; padding-right: 4px; background: #fff; border: 1px solid #9db4cf; color: #1670c4; }
.ime .ic:first-child { width: 28px; height: 28px; margin: -4px 0 0 -4px; }
.ime b { font-size: 15px; }
.ime .punct { width: 16px; font-size: 13px; }
.ball { position: absolute; z-index: 4; top: -30px; right: 121px; width: 48px; height: 48px; padding-top: 27px; border: 3px solid #8a9a8e; border-radius: 50%; background: #3cba54; color: #fff; font-weight: 700; text-align: center; line-height: 14px; box-shadow: 0 2px 4px #0006; }

.menu { display: flex; align-items: center; gap: 12px; height: 27px; padding: 0 6px 2px 5px; flex: none; }
.tb { gap: 4px; height: 22px; }
.tb .caret { margin-left: -1px; }
.tb .wide { margin-left: 3px; }
.account { display: flex; align-items: center; gap: 8px; margin-left: auto; }
.blank { width: 24px; height: 20px; background: #fafafa; }

.bars { display: flex; gap: 2px; padding: 0 2px 0 1px; margin-bottom: 2px; flex: none; }
.bar { display: flex; align-items: center; gap: 7px; height: 28px; padding-left: 5px; border-radius: 3px; background: linear-gradient(#fcfcfc, #f1f1f1); }
.files { width: 150px; }
.drawing { width: 547px; }
.viewing { flex: 1; padding-left: 3px; }
.viewing .sep { margin: 0 -1px; }
.files .tb .caret { margin-left: 2px; }
.more { margin-left: auto; padding: 0 3px 12px 0; font-size: 14px; font-weight: 700; line-height: 12px; }
.off { color: #858585; }
.off .caret { color: #555; }
.sep { width: 1px; height: 16px; background: #b5b5b5; flex: none; }
.tall { height: 24px; }
.mode { display: flex; align-items: center; gap: 3px; width: 62px; height: 22px; padding: 0 4px 0 2px; border: 1px solid #777; background: #f5f5f5; color: #858585; margin-right: -3px; }
.mode select { width: 28px; }
.mode .caret { color: #666; }

.work { display: flex; gap: 6px; flex: 1; min-height: 0; }
.side { display: flex; flex-direction: column; width: 165px; flex: none; font-family: "Noto Sans CJK SC", sans-serif; padding-bottom: 2px; }
.sidehead { display: flex; align-items: center; gap: 9px; height: 16px; padding-right: 4px; margin-bottom: 1px; background: #0454e4; color: #fff; font-size: 13px; }
.sidehead span { flex: 1; }
.sidehead svg { width: 9px; height: 9px; display: block; }
.page { height: 22px; justify-content: center; border: 1px solid #a0a0a0; border-top-color: #fff; box-shadow: 0 -1px #a0a0a0; margin-right: 1px; }
.treetools { display: flex; align-items: center; gap: 7px; height: 27px; margin: 0 1px 0 2px; padding-left: 5px; background: linear-gradient(#fcfcfc, #f1f1f1); flex: none; }
.tree { flex: 1; min-height: 0; margin: 0 1px 2px 2px; padding: 1px 0 0 7px; border: 1px solid #828790; background: #fff; overflow: hidden; }
.node, .leaf { position: relative; width: 100%; height: 16px; }
.chev { width: 9px; height: 9px; flex: none; }
.dash { width: 4px; height: 1px; margin: 0 1px 0 2px; border-top: 1px dotted #777; }
.node span { margin-left: 4px; }
.rail { width: 5px; height: 16px; border-right: 1px dotted #777; flex: none; }
.clear { border-color: transparent; }
.elbow { position: relative; width: 12px; height: 16px; margin-left: 19px; border-left: 1px dotted #777; flex: none; }
.elbow::after { content: ""; display: block; margin-top: 8px; border-top: 1px dotted #777; }
.end { height: 8px; align-self: flex-start; border-bottom: 1px dotted #777; }
.end::after { display: none; }
.leafname { padding: 0 3px 0 4px; height: 16px; }
.on .leafname { background: #d9d9d9; }
.leafname + .ic { margin-left: -2px; }
.new { height: 10px; padding: 0 1px; background: #ffe000; font-size: 9px; line-height: 10px; margin-bottom: 5px; }

.body { display: flex; flex-direction: column; flex: 1; min-width: 0; padding: 0 2px 3px 0; }
.editing { padding-left: 4px; flex: none; }
.editing .sep { margin: 0 -1px 0 0; }
.floor { display: flex; align-items: center; gap: 5px; margin-left: -4px; }
.floor span { display: flex; align-items: center; justify-content: space-between; width: 58px; height: 22px; padding: 0 2px 0 3px; background: linear-gradient(to right, #fff 49px, #f4f4f4 49px); }
.panes { display: flex; flex: 1; min-height: 0; gap: 3px; }
.members { display: flex; flex-direction: column; width: 184px; padding-top: 4px; flex: none; }
.search { display: flex; border-right: 2px solid #a0a3aa; padding-left: 1px; }
.search input { width: 157px; height: 25px; padding: 0 2px 2px; border: 1px solid #777; background: #fff; font: 12px/16px "Noto Sans CJK SC", sans-serif; color: #555; }
.search input::placeholder { color: #777; opacity: 1; }
.search button { flex: 1; justify-content: center; }
.list { flex: 1; margin-top: 1px; padding: 1px 0 0 7px; border: 1px solid #828790; border-right-width: 2px; background: #fff; font-family: "Noto Sans CJK SC", sans-serif; }
.member .elbow { margin-left: 18px; }
.pick { display: flex; align-items: center; gap: 6px; height: 16px; padding: 0 4px 0 1px; margin-left: -2px; background: #316ac5; }

.editor { display: flex; flex-direction: column; flex: 1; min-width: 0; border-left: 1px solid #d8d8d8; border-bottom: 1px solid #d8d8d8; background: #fff; padding: 0 1px 2px 3px; font-family: "Noto Sans CJK SC", sans-serif; }
.tabs { display: flex; height: 21px; margin: 0 -1px 3px -3px; border-bottom: 1px solid #d8d8d8; background: #f0f0f0; flex: none; }
.tab { height: 21px; padding: 0 7px 2px; border-right: 1px solid #d8d8d8; background: #fff; }
.sheet { position: relative; flex: 1; padding-top: 1px; border: 1px solid #a0a0a0; min-height: 0; }
table { border-collapse: separate; border-spacing: 0; table-layout: fixed; width: 370px; }
th, td { height: 19px; padding: 0; border: solid #c0c0c0; border-width: 0 1px 1px 0; font-weight: 400; line-height: 16px; text-align: left; }
thead th { height: 23px; background: linear-gradient(#fff, #f0f0f0); text-align: center; }
.no { width: 22px; text-align: center; background: linear-gradient(#fff, #f0f0f0); }
.name { width: 191px; }
.value { width: 126px; }
td.value { padding-left: 2px; }
.extra { width: 31px; text-align: center; }
thead .hot { background: linear-gradient(#fad8a0, #efbb5c); color: #600060; }
.cell { display: flex; align-items: center; height: 18px; }
.blue { color: #00f; }
.group { color: #808080; }
.slot { position: relative; width: 20px; height: 18px; flex: none; }
.child { width: 30px; }
.child::before { content: ""; position: absolute; left: 8px; top: -1px; height: 19px; border-left: 1px solid #c0c0c0; }
.child::after { content: ""; position: absolute; left: 9px; top: 9px; width: 16px; border-top: 1px solid #c0c0c0; }
.last::before { height: 11px; }
.parent::before { content: ""; position: absolute; left: 8px; bottom: 0; height: 4px; border-left: 1px solid #c0c0c0; }
.fold { position: absolute; left: 2px; top: 3px; width: 13px; height: 13px; border: 1px solid #b5b5b5; background: #fff; }
.fold svg { width: 11px; height: 11px; }
td input { appearance: none; display: block; width: 13px; height: 13px; margin: 1px auto 0; border: 1px solid #333; background: #fff; }
.cur .no { background: #fbd08a; color: #600060; }
.cur .name { background: #0078d7; color: #fff; }
.cur .value { background: #d9e9f8; }
.mark { position: absolute; z-index: 5; border: 3px solid #f00; pointer-events: none; }
.rowmark { left: -15px; top: 209px; width: 412px; height: 35px; }

.status { position: relative; display: flex; gap: 2px; height: 21px; flex: none; font-family: "Noto Sans CJK SC", sans-serif; }
.status > span { height: 20px; padding: 0 2px 0 1px; border: 1px solid #d5d5d5; background: linear-gradient(#fdfdfd, #f0f0f0); line-height: 18px; overflow: hidden; flex: none; }
.status .s1 { width: 148px; }
.status .s2 { width: 78px; }
.status .s3 { width: 98px; }
.status .s4 { width: 48px; }
.status .s5 { flex: 1 1 0; min-width: 0; }
.status .s6 { width: 71px; }
.statusmark { right: 36px; bottom: -7px; width: 540px; height: 41px; }

.taskbar { display: flex; align-items: stretch; height: 40px; background: linear-gradient(to right, #0a0c0e, #05161b 30%, #04191d 70%, #070c0e); color: #fff; flex: none; padding-right: 24px; border-right: 1px solid #000; }
.taskbar button { justify-content: center; }
.start { width: 48px; }
.helper { width: 48px; padding-left: 6px; }
.helper svg { width: 28px; height: 28px; }
.tasksearch { display: flex; align-items: center; gap: 5px; width: 150px; height: 30px; margin: 5px 2px 0 0; padding: 0 7px 0 3px; border: 1px solid #6c7070; background: #484848; position: relative; }
.tasksearch .big { width: 19px; height: 19px; flex: none; }
.tasksearch input { flex: 1; min-width: 0; padding: 0; border: 0; background: none; color: #ddd; font: 12px/16px "Noto Sans CJK SC", sans-serif; }
.tasksearch input::placeholder { color: #a8a8a8; opacity: 1; }
.tasksearch .lens { width: 18px; height: 18px; flex: none; }
.tasksearch::before, .tasksearch::after { content: ""; position: absolute; bottom: -6px; left: 8px; width: 40px; height: 2px; background: #76b9ed; }
.tasksearch::after { left: 57px; }
.apps { display: flex; gap: 1px; }
.apps button { position: relative; width: 48px; }
.apps svg { width: 24px; height: 24px; }
.run::after { content: ""; position: absolute; bottom: 0; left: 4px; right: 4px; height: 2px; background: #76b9ed; }
.active { background: #3a474b; }
.active::after { left: 0; right: 0; }
.tray { display: flex; align-items: center; gap: 8px; margin-left: auto; }
.clock { display: flex; flex-direction: column; align-items: center; width: 84px; padding: 1px 0 0 8px; line-height: 19px; }
.notify { margin-left: 12px; }
</style>
